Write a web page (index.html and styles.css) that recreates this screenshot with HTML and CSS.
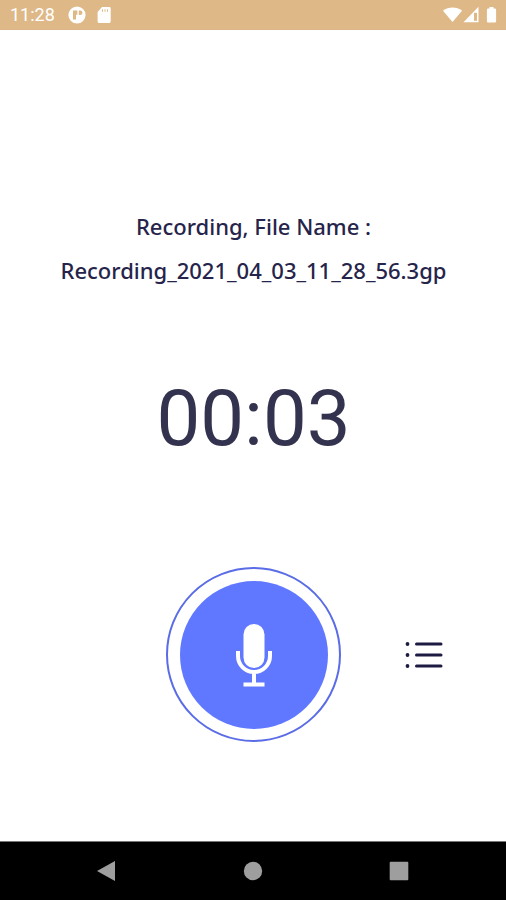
FILE: index.html
```html
<!DOCTYPE html>
<html lang="en">
<head>
<meta charset="utf-8">
<meta name="viewport" content="width=device-width, initial-scale=1">
<title>Audio Recorder</title>
<link rel="stylesheet" href="styles.css">
</head>
<body>
<header class="status">
  <time class="clock">11:28</time>
  <svg class="notification" width="18" height="18" viewBox="0 0 18 18" aria-hidden="true">
    <circle cx="9" cy="9" r="8.6" fill="#fff"/>
    <path d="M5 4.600h4.400v4.200H8v4.800H5z" fill="#deb887"/>
    <path d="M10.800 4.600h1.400a2.100 2.100 0 0 1 0 4.400h-1.400z" fill="#deb887"/>
  </svg>
  <svg class="card" width="14" height="18" viewBox="0 0 14 18" aria-hidden="true">
    <path d="M5 1h7.300a1.400 1.400 0 0 1 1.400 1.400v13.200a1.400 1.400 0 0 1-1.400 1.400H2a1.400 1.400 0 0 1-1.400-1.400V6z" fill="#fff"/>
    <path d="M5.500 3.300v2.500M8 3.300v2.500M10.500 3.300v2.500" stroke="#deb887" stroke-width="1"/>
  </svg>
  <svg class="signals" width="56" height="18" viewBox="0 0 56 18" aria-hidden="true">
    <path d="M1 4.800C6.500.4 14.500.4 20 4.800L10.500 16z" fill="#fff"/>
    <path d="M36.500.8V16.200H21.500z" fill="#fff"/>
    <path d="M32 6.800h3v8h-3z" fill="#deb887"/>
    <path d="M47.500 1h4v1.400h1.400a1.200 1.200 0 0 1 1.200 1.200v11.600a1.200 1.200 0 0 1-1.200 1.200h-6.800a1.200 1.200 0 0 1-1.200-1.200V3.600a1.200 1.200 0 0 1 1.200-1.200h1.400z" fill="#fff"/>
  </svg>
</header>
<main class="recorder">
  <p class="filename">Recording, File Name :<br>Recording_2021_04_03_11_28_56.3gp</p>
  <time class="timer">00:03</time>
  <div class="controls">
    <button class="record" type="button" aria-label="Stop recording">
      <span class="disc">
        <svg width="40" height="66" viewBox="0 0 40 66" aria-hidden="true">
          <rect x="9.500" y="2" width="21" height="44" rx="10.500" fill="#fff"/>
          <path d="M4 29v5a16 16 0 0 0 32 0v-5M20 50v13M9.500 62.500h21" fill="none" stroke="#fff" stroke-width="4"/>
        </svg>
      </span>
    </button>
    <button class="list" type="button" aria-label="Recordings">
      <svg width="38" height="28" viewBox="0 0 38 28" aria-hidden="true">
        <path d="M11.500 3h24.500M11.500 14h24.500M11.500 25h24.500" stroke="#1d1b42" stroke-width="3" stroke-linecap="round"/>
        <g fill="#1d1b42"><circle cx="2.500" cy="3" r="1.900"/><circle cx="2.500" cy="14" r="1.900"/><circle cx="2.500" cy="25" r="1.900"/></g>
      </svg>
    </button>
  </div>
</main>
<nav class="system" aria-label="System">
  <button type="button" aria-label="Back"><svg width="20" height="22" viewBox="0 0 20 22" aria-hidden="true"><path d="M18 1v20L0 11z"/></svg></button>
  <button type="button" aria-label="Home"><svg width="20" height="20" viewBox="0 0 20 20" aria-hidden="true"><circle cx="10" cy="10" r="9.200"/></svg></button>
  <button type="button" aria-label="Overview"><svg width="20" height="20" viewBox="0 0 20 20" aria-hidden="true"><rect x=".7" y=".7" width="18.600" height="18.600" rx="1"/></svg></button>
</nav>
</body>
</html>
```
FILE: styles.css
```css
* {
  box-sizing: border-box;
}

body {
  display: flex;
  flex-direction: column;
  min-height: 100vh;
  margin: 0;
  background: #fff;
  color: #26244a;
  font-family: "Noto Sans", "Open Sans", sans-serif;
}

button {
  display: grid;
  place-items: center;
  margin: 0;
  padding: 0;
  border: 0;
  background: none;
}

.status {
  display: flex;
  align-items: center;
  height: 30px;
  padding: 0 8px 0 10px;
  background: #deb887;
  color: #fff;
}

.clock {
  font: 18px/24px Roboto, sans-serif;
}

.notification {
  margin-left: 13px;
}

.card {
  margin-left: 11px;
}

.signals {
  margin-left: auto;
}

.recorder {
  display: flex;
  flex: 1;
  flex-direction: column;
  align-items: center;
  justify-content: flex-end;
  padding: 0 0 99px 1px;
}

.filename {
  margin: 0;
  font-size: 22px;
  font-weight: 500;
  line-height: 44px;
  text-align: center;
}

.timer {
  margin: 80px 0 101px;
  color: #34334f;
  font: 78px/94px Roboto, sans-serif;
}

.controls {
  display: grid;
  grid-template-columns: 1fr auto 1fr;
  align-items: center;
  align-self: stretch;
}

.record {
  grid-column: 2;
  width: 175px;
  height: 175px;
  border: 2px solid #5a6ce6;
  border-radius: 50%;
}

.disc {
  display: grid;
  place-items: center;
  width: 148px;
  height: 148px;
  border-radius: 50%;
  background: #6078ff;
}

.list {
  justify-self: center;
  padding: 8px;
}

.system {
  display: grid;
  grid-template-columns: repeat(3, 1fr);
  height: 59px;
  padding: 0 34px;
  border-top: 1px solid #777;
  background: #000;
  fill: #9e9e9e;
}
```
